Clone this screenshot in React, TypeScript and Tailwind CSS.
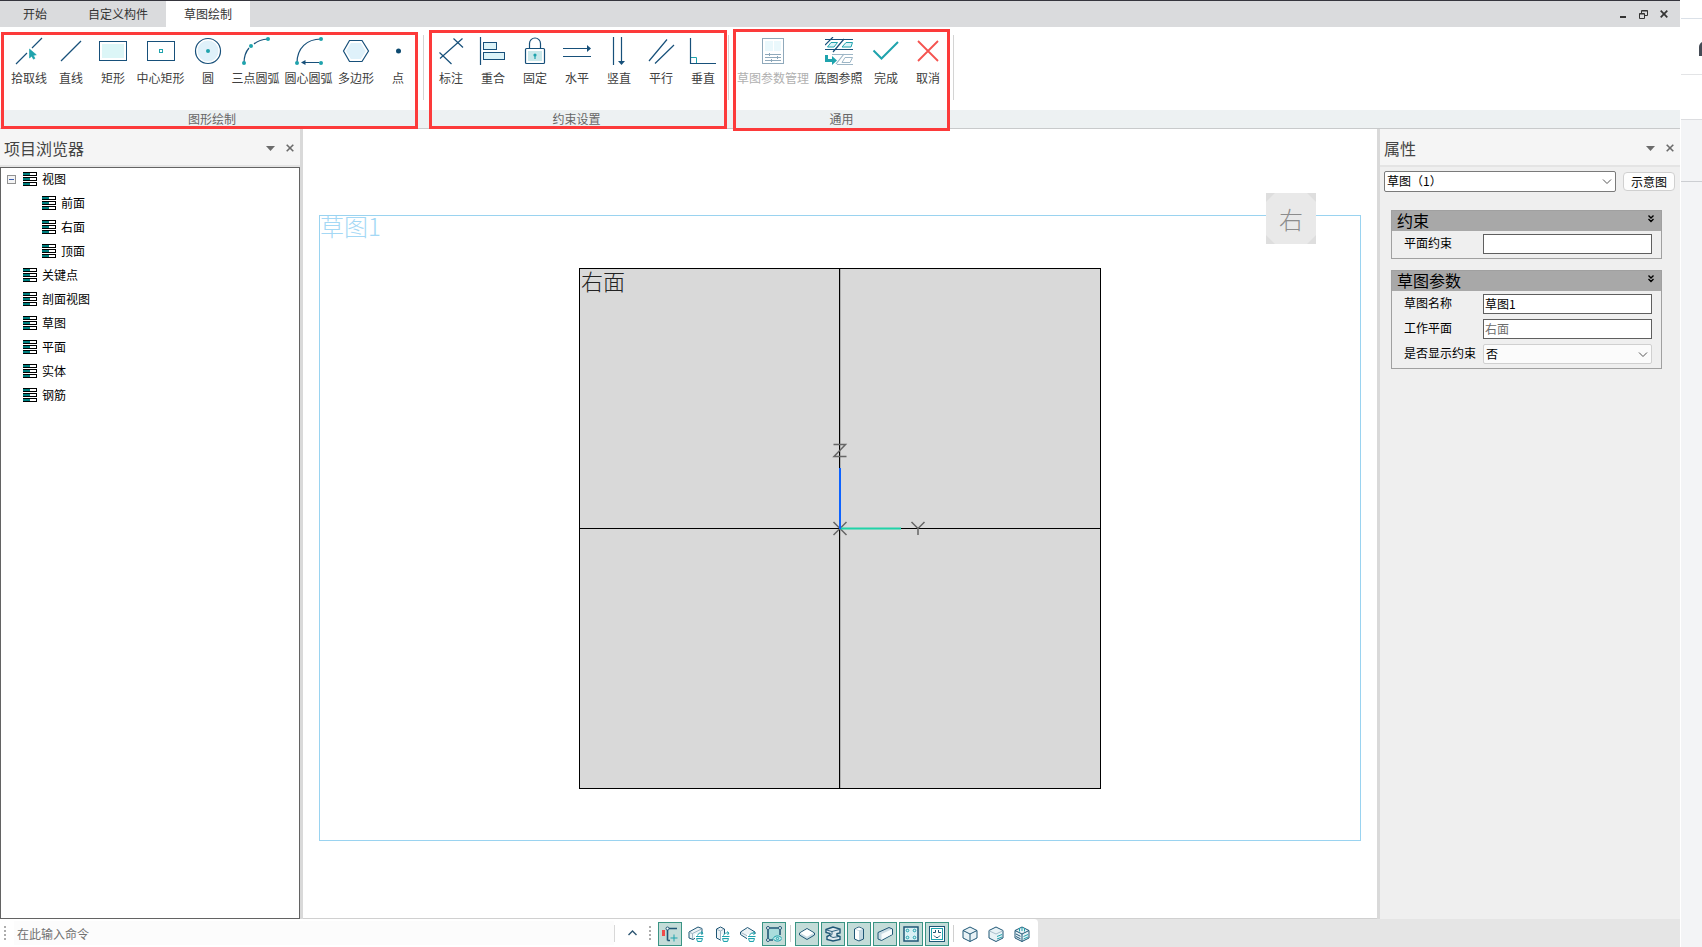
import React from "react";

const INK = "#17507a";
const TEAL = "#1fa3ad";
const PALE = "#dcf3f8";

type Tool = { label: string; icon: React.ReactNode; width?: string; disabled?: boolean };

function Icon({ children }: { children: React.ReactNode }) {
  return (
    <svg width="28" height="28" viewBox="0 0 28 28" fill="none" stroke={INK} strokeWidth="1.2" aria-hidden="true">
      {children}
    </svg>
  );
}

const W4 = "w-[53px]";

const drawTools: Tool[] = [
  {
    label: "拾取线",
    icon: (
      <Icon>
        <path d="M1 27 12 16M17 11 27 1" />
        <path d="M14.5 12v9l2.2-1.8 1.8 3 1.5-.9-1.7-2.9 3-.6z" fill={TEAL} stroke={TEAL} strokeWidth=".6" />
      </Icon>
    ),
  },
  { label: "直线", icon: <Icon><path d="M4 24 24 4" /></Icon> },
  {
    label: "矩形",
    icon: (
      <Icon>
        <rect x="0.5" y="4.5" width="27" height="19" strokeWidth="1" />
        <rect x="3" y="7" width="22" height="14" fill="#dcf6f7" stroke="none" />
      </Icon>
    ),
  },
  {
    label: "中心矩形",
    width: W4,
    icon: (
      <Icon>
        <rect x="0.5" y="4.5" width="27" height="19" strokeWidth="1" />
        <rect x="12.5" y="12.5" width="3" height="3" stroke={TEAL} strokeWidth="1" />
      </Icon>
    ),
  },
  {
    label: "圆",
    icon: (
      <Icon>
        <circle cx="14" cy="14" r="12.5" />
        <circle cx="14" cy="14" r="10.5" fill="#dff1fa" stroke="none" />
        <circle cx="14" cy="14" r="2" fill={TEAL} stroke="none" />
      </Icon>
    ),
  },
  {
    label: "三点圆弧",
    width: W4,
    icon: (
      <Icon>
        <path d="M2 26C2 20 3.5 15 7 11M12 7C15.500 4 20 2.500 26 2" />
        <g fill={TEAL} stroke="none">
          <circle cx="26" cy="2" r="2" />
          <circle cx="9" cy="9" r="2" />
          <circle cx="2" cy="26" r="2" />
        </g>
      </Icon>
    ),
  },
  {
    label: "圆心圆弧",
    width: W4,
    icon: (
      <Icon>
        <path d="M2 26C2 11 12 2 26 2M24 25.500H8" />
        <path d="M6 25.500l4.500-2.500v5z" fill={INK} stroke="none" />
        <g fill={TEAL} stroke="none">
          <circle cx="26" cy="2" r="2" />
          <circle cx="26" cy="26" r="2" />
          <circle cx="2" cy="26" r="2" />
        </g>
      </Icon>
    ),
  },
  {
    label: "多边形",
    icon: (
      <Icon>
        <path d="M7.500 3.500h12.500L26.500 14 20 24.500H7.500L1.500 14z" />
        <path d="M8.800 6h10L23.800 14l-5 8h-10L4 14z" fill="#dff1fa" stroke="none" />
      </Icon>
    ),
  },
  { label: "点", icon: <Icon><circle cx="14.500" cy="14" r="2.500" fill="#0d4a70" stroke="none" /></Icon> },
];

const constraintTools: Tool[] = [
  { label: "标注", icon: <Icon><path d="M3 21.500 25.500 1.500M16.500 1.500 26 10.500M2.500 15.500 14.500 27" /></Icon> },
  {
    label: "重合",
    icon: (
      <Icon>
        <path d="M1.500 0v28" />
        <g fill={PALE} strokeWidth="1">
          <rect x="4.500" y="5.500" width="13" height="7" />
          <rect x="4.500" y="15.500" width="21" height="7" />
        </g>
      </Icon>
    ),
  },
  {
    label: "固定",
    icon: (
      <Icon>
        <path d="M8.500 11V6.500a5.500 5.500 0 0 1 11 0V11" />
        <rect x="4.500" y="11.500" width="19" height="15" rx="1" />
        <rect x="7" y="14" width="14" height="10" fill="#c9e8ea" stroke="none" />
        <path d="M14 18v4" stroke={TEAL} />
        <circle cx="14" cy="18" r="1.600" fill={TEAL} stroke="none" />
      </Icon>
    ),
  },
  {
    label: "水平",
    icon: (
      <Icon>
        <path d="M0 11.500h25M0 19.500h28" />
        <path d="M28 11.500 24 8v7z" fill={INK} stroke="none" />
      </Icon>
    ),
  },
  {
    label: "竖直",
    icon: (
      <Icon>
        <path d="M8.500 0v28M16.500 0v25" />
        <path d="M16.500 28 13 24h7z" fill={INK} stroke="none" />
      </Icon>
    ),
  },
  { label: "平行", icon: <Icon><path d="M2 24 20 2.500M8 26.500 27 8" /></Icon> },
  {
    label: "垂直",
    icon: (
      <Icon>
        <path d="M1.500 20.500h6v6" stroke={TEAL} strokeWidth="1" />
        <path d="M1.500 1v25.500H27" />
      </Icon>
    ),
  },
];

const commonTools: Tool[] = [
  {
    label: "草图参数管理",
    width: "w-[78px]",
    disabled: true,
    icon: (
      <Icon>
        <g stroke="#8fa9bb" strokeWidth="1">
          <rect x="3.500" y="1.500" width="21" height="25" />
          <path d="M6 17.500h16M6 20.500h16M6 23.500h16M10.500 16v3M18.500 19v3M12.500 22v3" />
        </g>
        <path d="M6 4h8v10H6zM15 4h7v10h-7z" fill="#eaf8fc" stroke="none" />
      </Icon>
    ),
  },
  {
    label: "底图参照",
    width: W4,
    icon: (
      <Icon>
        <path d="M0 2.500h28M0 12.500h28" />
        <path d="M6 5.500h6.500L9 10H2.500zM21 5.500h6.500L26 10h-9z" fill={PALE} stroke={TEAL} strokeWidth="1" />
        <path d="M0 8 8 0M8 15 19 2" />
        <g stroke="#9db6c6">
          <path d="M7 17.500h21M12 27.500h16M11 27 19 17" />
          <path d="M20 20.500h7.500L25 25.500h-8z" strokeWidth="1" />
        </g>
        <path d="M0 18h3v4h4v-3l5 4.500-5 4.500v-3H0z" fill={TEAL} stroke="none" />
      </Icon>
    ),
  },
  { label: "完成", icon: <Icon><path d="M1.500 13.500 9.500 21.500 26 5" stroke={TEAL} strokeWidth="2" /></Icon> },
  { label: "取消", icon: <Icon><path d="M4 4 24 24M24 4 4 24" stroke="#f5534f" strokeWidth="1.800" /></Icon> },
];

function RibbonGroup({ title, tools, pad, mark }: { title: string; tools: Tool[]; pad: string; mark: string }) {
  return (
    <section aria-label={title} className="relative flex flex-col">
      <div className={`flex h-[83px] pr-1 ${pad}`}>
        {tools.map((t) => (
          <button
            key={t.label}
            disabled={t.disabled}
            className={`flex shrink-0 flex-col items-center gap-[5px] pt-2.5 text-xs leading-4 whitespace-nowrap text-[#404040] disabled:text-[#b0b0b0] ${t.width ?? "w-[42px]"}`}
          >
            {t.icon}
            <span>{t.label}</span>
          </button>
        ))}
        <div className="mt-2 -mr-1 ml-1 h-[65px] w-px bg-[#d4d4d4]" />
      </div>
      <div className="h-[18px] text-center text-xs leading-[18px] text-[#666]">{title}</div>
      <div className={`pointer-events-none absolute border-[3px] border-[#fc3a3a] ${mark}`} />
    </section>
  );
}

function PanelHeader({ title }: { title: string }) {
  return (
    <header className="flex h-[38px] shrink-0 items-center border-b-2 border-[#e4e4e4] bg-[#f5f5f5] pt-0.5 pr-px pl-1 text-[#444]">
      <h2 className="flex-1 text-base leading-6">{title}</h2>
      <button aria-label="面板菜单" className="flex w-[19px] justify-center">
        <svg width="9" height="5" viewBox="0 0 9 5"><path d="M0 0h9L4.500 5z" fill="#6b6b6b" /></svg>
      </button>
      <button aria-label="关闭面板" className="flex w-[19px] justify-center">
        <svg width="8" height="8" viewBox="0 0 8 8"><path d="M.7.700 7.300 7.300M7.300.700.7 7.300" stroke="#6b6b6b" strokeWidth="1.600" /></svg>
      </button>
    </header>
  );
}

function NodeIcon() {
  return (
    <svg width="14" height="14" viewBox="0 0 14 14" shapeRendering="crispEdges" aria-hidden="true">
      {[0, 5, 10].map((y) => (
        <g key={y}>
          <path d={`M0 ${y}h14v4H0z`} fill="#000" />
          <path d={`M0 ${y + 1}h7v2H0z`} fill="#008080" />
          <path d={`M7 ${y + 1}h6v2H7z`} fill="#fff" />
        </g>
      ))}
    </svg>
  );
}

const nodes = [
  { name: "视图", children: ["前面", "右面", "顶面"] },
  { name: "关键点" },
  { name: "剖面视图" },
  { name: "草图" },
  { name: "平面" },
  { name: "实体" },
  { name: "钢筋" },
];

function Tree() {
  return (
    <ul className="min-h-0 flex-1 border border-[#636363] bg-white text-xs text-black">
      {nodes.map((n) => (
        <li key={n.name}>
          <div className="flex h-6 items-center gap-[5px] pb-0.5 pl-1.5">
            {n.children ? (
              <button aria-label="折叠" className="mr-0.5 flex h-[9px] w-[9px] items-center justify-center border border-[#919191] bg-[#f4f4f4]">
                <span className="h-px w-[5px] bg-[#3c5fb0]" />
              </button>
            ) : (
              <span className="mr-0.5 w-[9px]" />
            )}
            <NodeIcon />
            <span>{n.name}</span>
          </div>
          {n.children && (
            <ul>
              {n.children.map((c) => (
                <li key={c} className="flex h-6 items-center gap-[5px] pb-0.5 pl-[41px]">
                  <NodeIcon />
                  <span>{c}</span>
                </li>
              ))}
            </ul>
          )}
        </li>
      ))}
    </ul>
  );
}

function Drawing() {
  return (
    <main className="flex min-w-0 flex-1 border-b border-[#d0d0d0] bg-white px-4 pt-[86px] pb-[77px]">
      <div className="relative flex flex-1 items-center justify-center border border-[#9ad3f0]">
        <span className="absolute -top-0.5 left-0 text-2xl leading-6 font-light text-[#a4d8f5]">草图1</span>
        <div className="absolute -top-[23px] right-11 flex h-[51px] w-[50px] items-center justify-center bg-[#dedede]">
          <svg className="absolute inset-0" width="50" height="51" viewBox="0 0 50 51" aria-hidden="true">
            <path d="M9 0h32l9 9v33l-9 9H9l-9-9V9z" fill="#e9e9e9" />
          </svg>
          <span className="relative text-2xl leading-6 font-light text-[#8c8c8c]">右</span>
        </div>
        <div className="relative h-[521px] w-[522px] border border-black bg-[#d9d9d9]">
          <span className="absolute -top-px left-px text-[22px] leading-6 font-light text-[#222]">右面</span>
          <svg width="520" height="519" viewBox="0 0 520 519" fill="none" aria-hidden="true">
            <path d="M0 259.500h520M259.500 0v519" stroke="#000" />
            <path d="M260.500 0v519" stroke="#b0b0b0" />
            <path d="M253.500 253l13 13M266.500 253l-13 13M253.500 175.500h12L254 187.500h12.500M331.500 253l6.500 6.500 6.500-6.500M338 259v7" stroke="#666" strokeWidth="1.500" />
            <path d="M260 259.500h61" stroke="#1fd3a8" strokeWidth="2" />
            <path d="M260 199v61" stroke="#0d63ff" strokeWidth="2" />
          </svg>
        </div>
      </div>
    </main>
  );
}

function PropGroup({ title, children }: { title: string; children: React.ReactNode }) {
  return (
    <section className="border border-[#a0a0a0] pb-1">
      <header className="flex h-5 items-center justify-between bg-[#a8a8a8] pr-1.5 pb-0.5 pl-[5px]">
        <h3 className="text-base leading-4 text-black">{title}</h3>
        <button aria-label="展开或折叠" className="px-px pb-0.5">
          <svg width="6" height="8" viewBox="0 0 6 8"><path d="M.5.500 3 3 5.500.500M.5 4 3 6.500 5.500 4" fill="none" stroke="#000" strokeWidth="1.400" /></svg>
        </button>
      </header>
      <div className="flex flex-col gap-[5px] pt-[3px] pr-[9px] pl-3">{children}</div>
    </section>
  );
}

function Prop({ id, label, children }: { id: string; label: string; children: React.ReactNode }) {
  return (
    <div className="flex h-5 items-center">
      <label htmlFor={id} className="w-[79px] shrink-0 pb-0.5 whitespace-nowrap">{label}</label>
      {children}
    </div>
  );
}

function Caret() {
  return (
    <svg className="pointer-events-none absolute top-2 right-1" width="10" height="6" viewBox="0 0 10 6" aria-hidden="true">
      <path d="M1 .500l4 4 4-4" fill="none" stroke="#555" />
    </svg>
  );
}

const field = "h-5 w-full min-w-0 flex-1 border border-[#5f5f5f] bg-white px-px pb-0.5 text-xs";

function Properties() {
  return (
    <aside className="flex w-[300px] shrink-0 flex-col bg-[#efefef] text-xs text-black">
      <PanelHeader title="属性" />
      <div className="flex items-center gap-[7px] pt-1 pr-[5px] pl-1">
        <div className="relative flex-1">
          <select aria-label="对象" className="block h-[21px] w-full appearance-none rounded-xs border border-[#7a7a7a] bg-white px-0.5 pb-0.5">
            <option>草图（1）</option>
          </select>
          <Caret />
        </div>
        <button className="h-[19px] w-[52px] rounded border border-[#d0d0d0] bg-[#fdfdfd] leading-4">示意图</button>
      </div>
      <div className="flex flex-col gap-[11px] pt-[18px] pr-[18px] pl-[11px]">
        <PropGroup title="约束">
          <Prop id="plane" label="平面约束"><input id="plane" className={field} /></Prop>
        </PropGroup>
        <PropGroup title="草图参数">
          <Prop id="name" label="草图名称"><input id="name" className={field} defaultValue="草图1" /></Prop>
          <Prop id="work" label="工作平面"><input id="work" className={`${field} text-[#6d6d6d]`} readOnly value="右面" /></Prop>
          <Prop id="show" label="是否显示约束">
            <div className="relative flex-1">
              <select id="show" className="block h-5 w-full appearance-none rounded-xs border border-[#d0d0d0] bg-[#fbfbfb] px-0.5">
                <option>否</option>
              </select>
              <Caret />
            </div>
          </Prop>
        </PropGroup>
      </div>
    </aside>
  );
}

const swap = (
  <>
    <path d="M7 8h9v8H7z" fill="#fff" stroke="none" />
    <path d="M9.500 9.500C10 7.500 12 6.500 14.500 7M13 5.500l2 1.500-1.500 2M8 10.500h7.500" stroke={TEAL} />
    <path d="M8.500 12.500h6l-1 3h-4z" stroke={TEAL} fill="#e2f6f7" />
  </>
);
const cubeFrame = <path d="M8 1 15 4.500v7.500L8 15.500 1 12V4.500z" fill="#e8f2f6" />;

type Toggle = { label: string; on?: boolean; art: React.ReactNode };
const statusGroups: Toggle[][] = [
  [
    { label: "约束标记", on: true, art: <><path d="M0 4h3v6H0z" fill="#f04a4a" stroke="none" /><path d="M5.500 3.500v11M7 2.500h8M5.500 14.500H8" strokeWidth="1.600" /><circle cx="5.500" cy="2.500" r="1.500" fill="#fff" /><path d="M12 8.500v7M8.500 12h7" stroke={TEAL} /></> },
    { label: "切换前面", art: <><path d="M1 6 10 1l4 1.500V8L5 13.500l-4-1.500z" fill="#edf3f6" /><path d="M1.500 6.500l3 1L13.500 3M4.500 7.500v5.500" stroke="#9fb6c4" />{swap}</> },
    { label: "切换侧面", art: <><path d="M2.500 3 6.500 1l4 2v9l-4 2-4-2z" fill="#edf3f6" /><path d="M3 3.500 6.500 5l3.500-2M6.500 5v8.500" stroke="#9fb6c4" />{swap}</> },
    { label: "切换顶面", art: <><path d="M.5 6 7.500 1.500l7.500 4.500v2.500L7.500 13 .5 8.500z" fill="#edf3f6" /><path d="M1 6.500 7.500 10 14.500 6.500" stroke="#9fb6c4" />{swap}</> },
    { label: "显示草图", on: true, art: <><path d="M3 3h10v10H3z" fill="#a9dcdc" stroke="none" /><path d="M4 2h8M2 4v8M14 4v5M4 14h3" strokeWidth="1.600" /><g fill="#fff"><circle cx="2" cy="2" r="1.500" /><circle cx="14" cy="2" r="1.500" /><circle cx="2" cy="14" r="1.500" /></g><path d="M7 12.500c2-3.500 7-3.500 9 0-2 3.500-7 3.500-9 0z" fill="#c4eaea" stroke={TEAL} /><circle cx="11.500" cy="12.500" r="1.200" stroke={TEAL} /></> },
  ],
  [
    { label: "板", on: true, art: <><path d="M.5 7 8 2.500 15.500 7v2L8 13.500.5 9z" fill="#cbdde4" /><path d="M1.500 7 8 3.200 14.500 7 8 10.800z" fill="#fff" stroke="none" /></> },
    { label: "梁", on: true, art: <><path d="M1 3.500 8 1l7 2v4l-3 .5v2l3 1v3L8 15l-6-1.500v-3l3-1.500V7.500L1 6.500z" fill="#dfeaef" strokeWidth="1.400" /><path d="M1.500 4 7 5.500 14.500 3.500M7 5.500v3L5 10l3 1.500 6-1" strokeWidth=".9" /></> },
    { label: "柱", on: true, art: <><path d="M3.500 3 8 1l4.500 2v10L8 15l-4.500-2z" fill="#c3d8e1" /><path d="M4 3.500 8 5v9.200l-4-1.700zM8 1.600 11.800 3 8 4.300 4.200 3z" fill="#fff" stroke="none" /></> },
    { label: "墙", on: true, art: <><path d="M1 6.500 12 1.500l3.500 1.500v5.500L4.500 14.500 1 13z" fill="#c9dbe3" /><path d="M4.500 8 15 3.300v4.900L4.500 13.800z" fill="#f7fbfc" stroke="none" /></> },
    { label: "孔洞", on: true, art: <><rect x="1" y="1" width="14" height="14" fill="#d9f0f4" strokeWidth="1.500" /><g stroke={TEAL}><circle cx="4.500" cy="4.500" r="1.300" /><circle cx="11.500" cy="4.500" r="1.300" /><circle cx="4.500" cy="11.500" r="1.300" /><circle cx="11.500" cy="11.500" r="1.300" /></g></> },
    { label: "预埋件", on: true, art: <><rect x=".5" y=".5" width="15" height="15" fill="#fff" /><rect x="2.500" y="2.500" width="11" height="11" stroke={TEAL} /><path d="M6.500 4v2.500H4M9.500 4v2.500H12M5 9.500l2 2h2l2-2" /></> },
  ],
  [
    { label: "线框", art: <>{cubeFrame}<path d="M1 4.500 8 8l7-3.500M8 8v7.500" /></> },
    { label: "着色", art: <>{cubeFrame}<path d="M1.500 5 8 8l6.500-3" stroke="#a9bfcb" /><path d="M9 10.500l5-2M9 13l5-2" stroke={TEAL} /></> },
    { label: "真实", art: <>{cubeFrame}<path d="M1 4.500 8 8l7-3.500M8 8v7.500M2 8l4.500 2.300M2 10.500l4.500 2.300" /><path d="M9.500 10.500l4.500-2M9.500 13l4.500-2M5.500 2v3.500M8 1v4M10.500 2v3.500" stroke={TEAL} /></> },
  ],
];

function Grip() {
  return (
    <div className="flex w-0.5 flex-col gap-0.5">
      {[0, 1, 2, 3].map((i) => <span key={i} className="h-0.5 w-0.5 bg-[#adadad]" />)}
    </div>
  );
}

function StatusBar() {
  return (
    <footer className="flex h-7 shrink-0 bg-[#e5e5e5]">
      <div className="flex items-center rounded-tr bg-white pr-1 pl-1">
        <Grip />
        <input aria-label="命令" placeholder="在此输入命令" className="ml-2 h-6 w-[600px] bg-[#fcfcfc] px-[3px] text-xs placeholder:text-[#707070]" />
        <div className="h-[17px] w-px bg-[#d8d8d8]" />
        <button aria-label="展开历史" className="flex w-[34px] justify-center">
          <svg width="9" height="6" viewBox="0 0 9 6"><path d="M.5 5 4.500 1l4 4" fill="none" stroke="#2c5572" strokeWidth="1.400" /></svg>
        </button>
        <Grip />
        <div className="ml-[7px] flex items-center pt-px">
          {statusGroups.map((g, i) => (
            <React.Fragment key={i}>
              {i > 0 && <div className="mx-1 h-[17px] w-px bg-[#d0d0d0]" />}
              <div className="flex gap-0.5">
                {g.map((t) => (
                  <button
                    key={t.label}
                    aria-label={t.label}
                    aria-pressed={!!t.on}
                    className={`flex h-6 w-6 items-center justify-center ${t.on ? "border border-[#3a9484] bg-[#c3dcd8]" : ""}`}
                  >
                    <svg width="16" height="16" viewBox="0 0 16 16" fill="none" stroke="#1f5675">{t.art}</svg>
                  </button>
                ))}
              </div>
            </React.Fragment>
          ))}
        </div>
      </div>
    </footer>
  );
}

export default function App() {
  return (
    <div className="flex h-screen overflow-hidden bg-white font-['Noto_Sans_CJK_SC','Liberation_Sans',sans-serif]">
      <div className="flex min-w-0 flex-1 flex-col">
        <nav className="flex h-[27px] shrink-0 border-t border-[#35353d] bg-[#dadbdd] text-xs text-[#333]">
          <button className="w-[70px]">开始</button>
          <button className="px-[18px]">自定义构件</button>
          <button className="bg-white px-[18px]">草图绘制</button>
          <div className="ml-auto flex items-center gap-3 pr-3">
            <button aria-label="最小化"><svg width="8" height="9" viewBox="0 0 8 9"><path d="M1 6h6v2H1z" fill="#333" /></svg></button>
            <button aria-label="还原"><svg width="9" height="9" viewBox="0 0 9 9" fill="none" stroke="#333"><path d="M2.500 3V.500h6v5H6" /><path d="M3 1h5.500" /><path d="M.5 3.500h5v5h-5zM.5 4h5" /></svg></button>
            <button aria-label="关闭"><svg width="8" height="8" viewBox="0 0 8 8"><path d="M.7.700 7.300 7.300M7.300.700.7 7.300" stroke="#333" strokeWidth="1.700" /></svg></button>
          </div>
        </nav>
        <div className="z-10 flex h-[102px] shrink-0 border-b border-[#c8cacb] bg-linear-to-b from-white from-[83px] to-[#edf1f2] to-[83px]">
          <RibbonGroup title="图形绘制" tools={drawTools} pad="pl-2" mark="top-[5px] right-1.5 -bottom-px left-px" />
          <RibbonGroup title="约束设置" tools={constraintTools} pad="pl-1.5" mark="top-[3px] right-0.5 -bottom-px left-[5px]" />
          <RibbonGroup title="通用" tools={commonTools} pad="pl-[5px]" mark="top-0.5 right-1 -bottom-[3px] left-1" />
        </div>
        <div className="flex min-h-0 flex-1 bg-[#d9d9d9]">
          <aside className="flex w-[300px] shrink-0 flex-col">
            <PanelHeader title="项目浏览器" />
            <Tree />
          </aside>
          <div className="w-[3px] shrink-0" />
          <Drawing />
          <div className="w-[3px] shrink-0" />
          <Properties />
        </div>
        <StatusBar />
      </div>
      <div className="ml-px flex w-[21px] shrink-0 flex-col overflow-hidden bg-[#f3f4f6]">
        <div className="h-[19px] border-b border-[#dbe1e8] bg-white" />
        <div className="flex h-14 justify-end border-b border-[#e3e4e6] bg-white pt-[23px]">
          <svg width="3" height="14" viewBox="0 0 3 14"><path d="M3 0C1 1 0 3 0 5v9h3z" fill="#454b55" /></svg>
        </div>
        <div className="h-[45px] border-b border-[#dcdde0] bg-white" />
        <div className="h-[62px] border-b border-[#ccced2]" />
      </div>
    </div>
  );
}
